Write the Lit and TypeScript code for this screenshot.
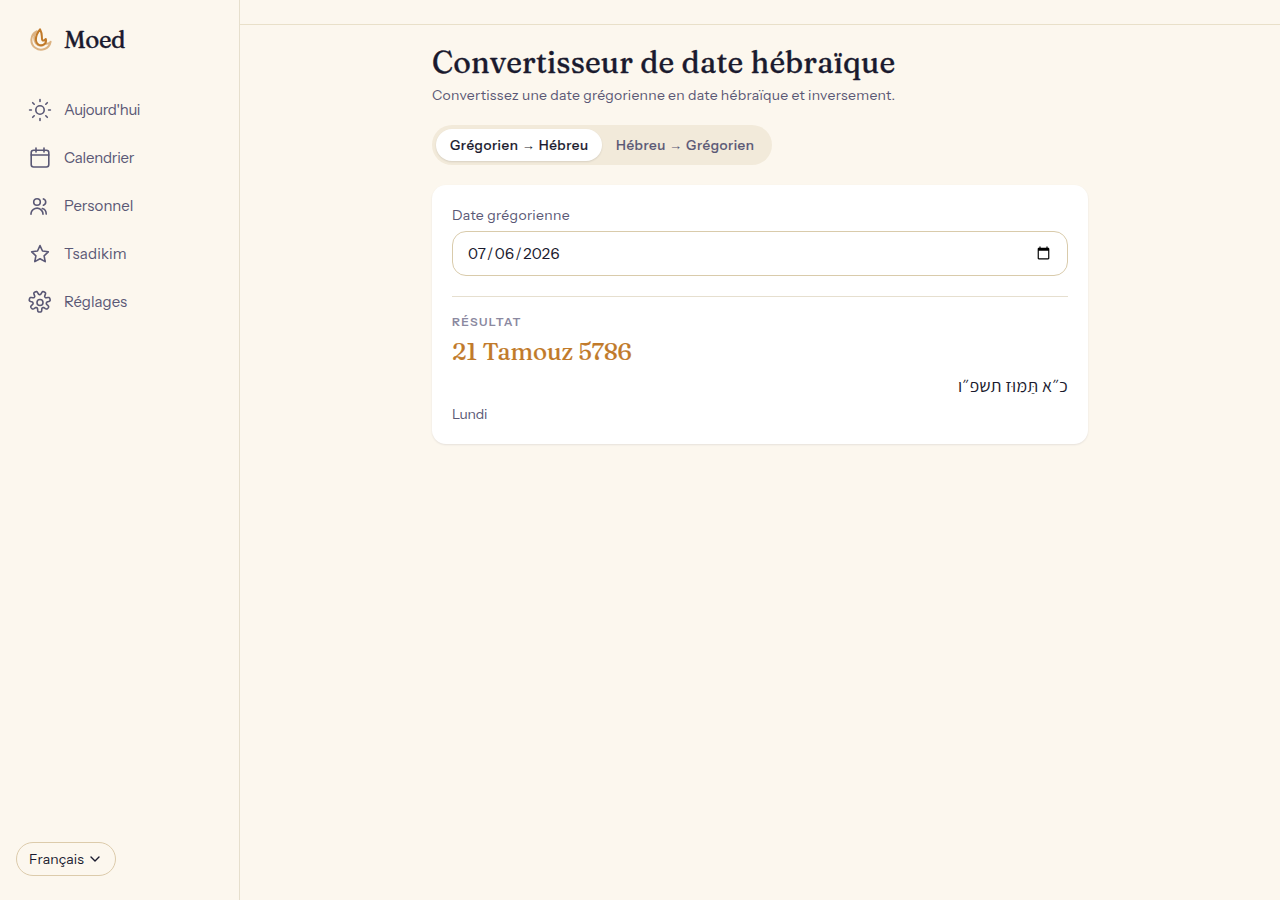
import { LitElement, html, css, svg } from "lit";
import { customElement, state } from "lit/decorators.js";

// Outline of a cog with seven rounded teeth, one of them pointing straight down.
const cog = Array.from({ length: 141 }, (_, i) => {
  const a = (i / 140) * Math.PI * 2;
  const r = 8.7 + 1.9 * Math.tanh(2.2 * Math.cos(7 * (a - Math.PI / 2)) + 0.2);
  return `${i ? "L" : "M"}${(11.7 + r * Math.cos(a)).toFixed(2)} ${(11.500 + r * Math.sin(a)).toFixed(2)}`;
}).join("") + "z";

const icons = {
  sun: svg`<circle cx="12" cy="12" r="4.2"/><path d="M12 1.600v1.800M12 20.600v1.800M1.600 12h1.800M20.600 12h1.800M4.700 4.700l1.500 1.500M17.800 17.800l1.500 1.500M4.700 19.300l1.500-1.500M17.800 6.200l1.500-1.500"/>`,
  calendar: svg`<rect x="3.2" y="4.200" width="17.600" height="16.800" rx="2.400"/><path d="M3.200 9h17.600M8 2v4M16 2v4"/>`,
  people: svg`<circle cx="9" cy="8" r="3.300"/><path d="M3 20.300v-.5a6 6 0 0 1 10.600-3.400Q15 18 15 20.300M15.400 4.900a3.300 3.300 0 0 1 0 6.300M14.300 14.600q3.900 1 3.900 5.500"/>`,
  star: svg`<path d="M12 3.600l2.500 5.400 5.800.8-4.200 4 1.100 5.800-5.200-2.900-5.200 2.900 1.100-5.800-4.200-4 5.800-.8z"/>`,
  gear: svg`<circle cx="12" cy="12.500" r="3"/><path d=${cog}/>`,
};

@customElement("app-root")
export class AppRoot extends LitElement {
  @state() private items = [
    { label: "Aujourd'hui", icon: icons.sun, cls: "tight" },
    { label: "Calendrier", icon: icons.calendar, cls: "snug" },
    { label: "Personnel", icon: icons.people, cls: "" },
    { label: "Tsadikim", icon: icons.star, cls: "loose" },
    { label: "Réglages", icon: icons.gear, cls: "" },
  ];

  static styles = css`
    :host { display: flex; height: 100vh; background: #fcf7ee; color: #1a1a2e; font: 15px/24px "Instrument Sans", "Liberation Sans", sans-serif; }
    * { box-sizing: border-box; }
    .side { width: 240px; border-right: 1px solid #e6dfcd; padding: 24px 16px; display: flex; flex-direction: column; flex: none; }
    .brand { display: flex; align-items: center; gap: 12px; padding: 0 12px; height: 32px; margin-bottom: 32px; }
    .serif { font-family: Fraunces, "Liberation Serif", serif; -webkit-text-stroke: .35px currentColor; font-weight: 400; white-space: nowrap; }
    .name { font-size: 24px; letter-spacing: -.4px; line-height: 30px; }
    .logo { color: #c17a2a; }
    nav { display: flex; flex-direction: column; gap: 4px; }
    .item { display: flex; align-items: center; gap: 12px; height: 44px; padding: 0 12px; color: #5a5875; white-space: nowrap; }
    .tight { letter-spacing: -.32px; }
    .snug { letter-spacing: -.2px; }
    .loose { letter-spacing: .14px; }
    svg { fill: none; stroke: currentColor; stroke-width: 1.6; stroke-linecap: round; stroke-linejoin: round; flex: none; display: block; }
    .lang { margin-top: auto; width: 100px; height: 34px; border: 1px solid #dccbab; border-radius: 17px; display: flex; align-items: center; gap: 5px; padding-left: 12px; font-size: 14px; }
    .lang span { width: 55px; letter-spacing: .1px; }
    .lang svg { stroke-width: 1.4; }
    .content { flex: 1; }
    .top { height: 25px; border-bottom: 1px solid #e9e0c9; }
    main { width: 656px; margin: 0 auto; padding-top: 16px; }
    h1 { margin: 0; font-size: 30px; line-height: 44px; letter-spacing: .2px; }
    .sub { font-size: 14px; line-height: 20px; color: #5a5875; white-space: nowrap; letter-spacing: .26px; }
    .tabs { display: flex; width: 340px; height: 40px; margin: 20px 0; padding: 4px; border-radius: 20px; background: #f2eada; }
    .tab { border-radius: 16px; padding: 0 14px; font-size: 13.5px; font-weight: 500; letter-spacing: .55px; line-height: 32px; color: #5a5875; white-space: nowrap; width: 166px; -webkit-text-stroke: .15px currentColor; }
    .arrow { font-family: "Liberation Sans", sans-serif; font-size: 13px; letter-spacing: .9px; -webkit-text-stroke: 0; }
    .active { background: #fff; color: #1a1a2e; box-shadow: 0 1px 2px #0000001c; }
    .card { background: #fff; border-radius: 14px; padding: 20px; height: 259px; box-shadow: 0 1px 2px #1a1a2e18; }
    .label { font-size: 14px; line-height: 20px; color: #5a5875; letter-spacing: .33px; }
    .field { display: block; width: 100%; height: 45px; margin: 6px 0 0; padding: 0 14px; border: 1px solid #d9cbab; border-radius: 14px; background: #fff; color: #1a1a2e; font: 15px "Instrument Sans", "Liberation Sans", sans-serif; letter-spacing: .2px; outline: none; }
    .result { margin-top: 20px; border-top: 1px solid #e6dfcf; padding-top: 16px; }
    .caption { font-size: 12px; line-height: 18px; font-weight: 600; letter-spacing: 1.400px; color: #8b89a0; }
    .value { color: #c17a2a; font-size: 24px; line-height: 34px; margin-top: 4px; letter-spacing: -.05px; -webkit-text-stroke-width: .2px; }
    .hebrew { font: 18px/28px Assistant, "Noto Sans Hebrew", sans-serif; margin-top: 3px; letter-spacing: .15px; }
    .day { font-size: 14px; line-height: 20px; color: #5a5875; margin-top: 4px; letter-spacing: -.2px; }
  `;

  render() {
    return html`
      <aside class="side">
        <div class="brand">
          <svg class="logo" width="24" height="24" viewBox="0 0 24 24">
            <path opacity=".55" stroke-width="2" d="M8.600 3.400A9.700 9.700 0 1 0 22.600 13.800C20.500 16.200 18.300 16 16.500 15.500M9 3.400C5.500 6.500 5.500 12 8 15.500c2.400 3 6.500 3 9 0"/>
            <path stroke-width="2" d="M12 1.300C9.500 4.500 7.500 8.500 8 12.500c.4 3.300 3 5.200 6 4.800 3-.5 4.700-2.800 3.800-6.300-1.300 1.600-2.600 2-3.400 1.200C13 10.500 15.300 7.500 12 1.300z"/>
          </svg>
          <span class="serif name">Moed</span>
        </div>
        <nav>
          ${this.items.map((i) => html`<div class="item"><svg width="24" height="24" viewBox="0 0 24 24">${i.icon}</svg><span class=${i.cls}>${i.label}</span></div>`)}
        </nav>
        <div class="lang"><span>Français</span><svg width="12" height="12" viewBox="0 0 12 12"><path d="M2 4l4 4 4-4"/></svg></div>
      </aside>
      <div class="content">
        <div class="top"></div>
        <main>
          <h1 class="serif">Convertisseur de date hébraïque</h1>
          <div class="sub">Convertissez une date grégorienne en date hébraïque et inversement.</div>
          <div class="tabs">
            <div class="tab active">Grégorien <span class="arrow">→</span> Hébreu</div>
            <div class="tab">Hébreu <span class="arrow">→</span> Grégorien</div>
          </div>
          <section class="card">
            <div class="label">Date grégorienne</div>
            <input class="field" type="date" value="2026-07-06" />
            <div class="result">
              <div class="caption">RÉSULTAT</div>
              <div class="serif value">21 Tamouz 5786</div>
              <div class="hebrew" dir="rtl" lang="he">כ״א תַּמּוּז תשפ״ו</div>
              <div class="day">Lundi</div>
            </div>
          </section>
        </main>
      </div>`;
  }
}
